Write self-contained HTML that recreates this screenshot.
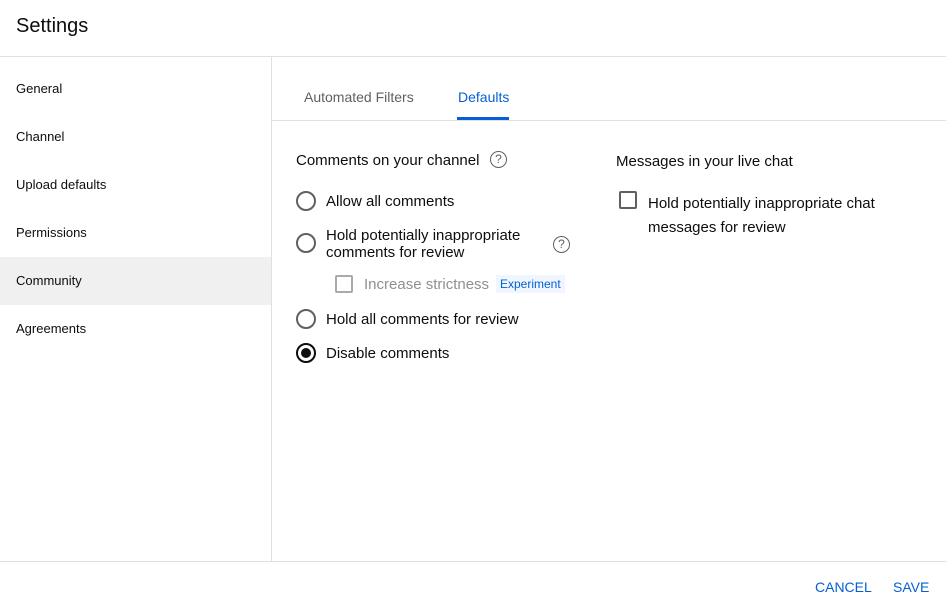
<!DOCTYPE html>
<html><head><style>
*{margin:0;padding:0;box-sizing:border-box}
body{width:946px;height:603px;background:#fff;font-family:"Liberation Sans",Arial,sans-serif;color:#0d0d0d;position:relative;overflow:hidden}
.a{position:absolute;white-space:nowrap}
.hdr{left:0;top:0;width:946px;height:57px;border-bottom:1px solid #e0e0e0}
.side{left:0;top:57px;width:272px;height:504px;border-right:1px solid #e0e0e0}
.nav{font-size:13px;left:16px;color:#0d0d0d}
.f{font-size:15px;color:#0d0d0d}
.radio{width:20px;height:20px;border:2px solid #606060;border-radius:50%}
.q{width:17px;height:17px;border:1.5px solid #606060;border-radius:50%;font-size:12px;text-align:center;line-height:14px;color:#606060}
.cb{width:18px;height:18px;border:2px solid #606060;border-radius:2px}
</style></head><body>
<div class="a hdr"></div>
<div class="a" style="left:16px;top:15px;font-size:20px">Settings</div>
<div class="a side"></div>
<div class="a" style="left:0;top:257px;width:271px;height:48px;background:#f0f0f0"></div>
<div class="a nav" style="top:81px">General</div>
<div class="a nav" style="top:129px">Channel</div>
<div class="a nav" style="top:177px">Upload defaults</div>
<div class="a nav" style="top:225px">Permissions</div>
<div class="a nav" style="top:273px">Community</div>
<div class="a nav" style="top:321px">Agreements</div>
<div class="a" style="left:272px;top:120px;width:674px;height:1px;background:#e0e0e0"></div>
<div class="a" style="left:304px;top:89px;font-size:14px;color:#606060">Automated Filters</div>
<div class="a" style="left:458px;top:89px;font-size:14px;color:#065fd4">Defaults</div>
<div class="a" style="left:457px;top:117px;width:52px;height:3px;background:#065fd4"></div>
<div class="a f" style="left:296px;top:152px">Comments on your channel</div>
<div class="a q" style="left:490px;top:151px">?</div>
<div class="a radio" style="left:296px;top:191px"></div>
<div class="a f" style="left:326px;top:193px">Allow all comments</div>
<div class="a radio" style="left:296px;top:233px"></div>
<div class="a f" style="left:326px;top:227px;line-height:17px">Hold potentially inappropriate<br>comments for review</div>
<div class="a q" style="left:553px;top:236px">?</div>
<div class="a cb" style="left:335px;top:275px;border-color:#aaa"></div>
<div class="a f" style="left:364px;top:276px;color:#909090">Increase strictness</div>
<div class="a" style="left:496px;top:275px;height:18px;padding:0 4px;background:#f0f6ff;color:#065fd4;font-size:12px;line-height:18px">Experiment</div>
<div class="a radio" style="left:296px;top:309px"></div>
<div class="a f" style="left:326px;top:311px">Hold all comments for review</div>
<div class="a radio" style="left:296px;top:343px;border-color:#0d0d0d"><div style="width:10px;height:10px;margin:3px;border-radius:50%;background:#0d0d0d"></div></div>
<div class="a f" style="left:326px;top:345px">Disable comments</div>
<div class="a f" style="left:616px;top:153px">Messages in your live chat</div>
<div class="a cb" style="left:619px;top:191px"></div>
<div class="a f" style="left:648px;top:192px;line-height:24px">Hold potentially inappropriate chat<br>messages for review</div>
<div class="a" style="left:0;top:561px;width:946px;height:1px;background:#e0e0e0"></div>
<div class="a" style="left:815px;top:579px;font-size:14px;color:#065fd4">CANCEL</div>
<div class="a" style="left:893px;top:579px;font-size:14px;color:#065fd4">SAVE</div>
</body></html>
